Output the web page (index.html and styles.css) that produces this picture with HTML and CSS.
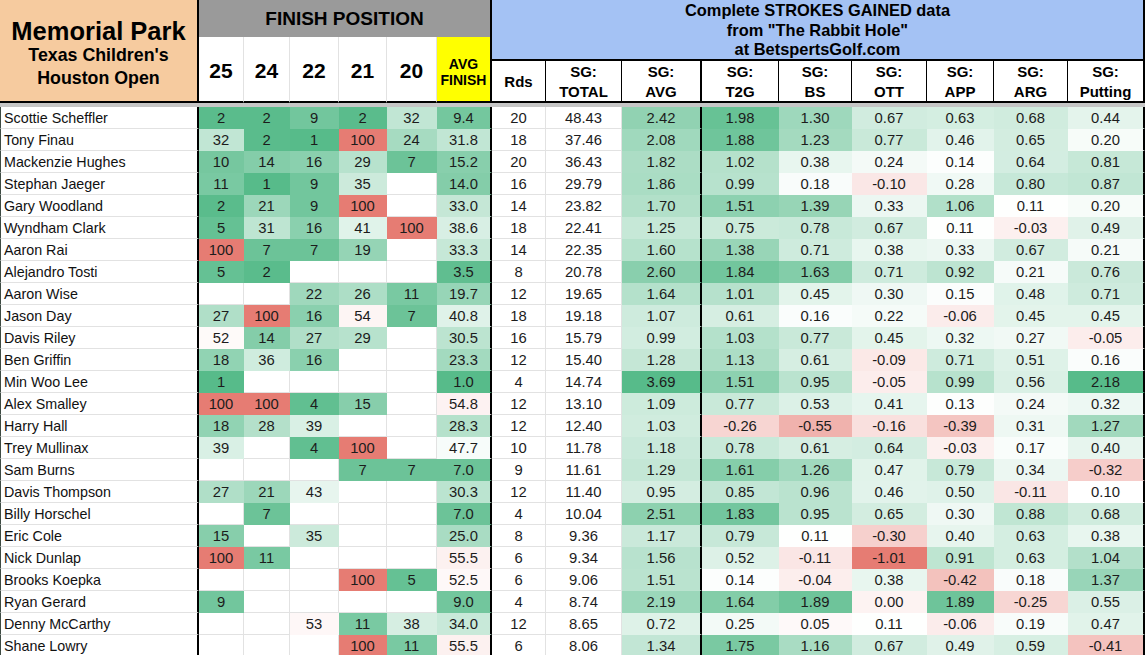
FILE: index.html
```html
<!DOCTYPE html>
<html lang="en">
<head>
<meta charset="utf-8">
<title>Memorial Park – Texas Children's Houston Open</title>
<link rel="stylesheet" href="styles.css">
</head>
<body>
<div class="sheet">
  <div class="title">
    <div class="t1">Memorial Park</div>
    <div class="t2">Texas Children's</div>
    <div class="t2">Houston Open</div>
  </div>
  <div class="fp">FINISH POSITION</div>
  <div class="blue"><span>Complete STROKES GAINED data<br>from "The Rabbit Hole"<br>at BetspertsGolf.com</span></div>
  <div class="yr">25</div>
  <div class="yr">24</div>
  <div class="yr">22</div>
  <div class="yr">21</div>
  <div class="yr">20</div>
  <div class="avgf"><span>AVG<br>FINISH</span></div>
  <div class="lb"><span>Rds</span></div>
  <div class="lb"><span>SG:<br>TOTAL</span></div>
  <div class="lb tk"><span>SG:<br>AVG</span></div>
  <div class="lb"><span>SG:<br>T2G</span></div>
  <div class="lb"><span>SG:<br>BS</span></div>
  <div class="lb"><span>SG:<br>OTT</span></div>
  <div class="lb"><span>SG:<br>APP</span></div>
  <div class="lb"><span>SG:<br>ARG</span></div>
  <div class="lb tk"><span>SG:<br>Putting</span></div>
  <div class="band"></div>

  <div class="nm">Scottie Scheffler</div><div class="c fin">2</div><div class="c fin">2</div><div class="c fin">9</div><div class="c fin">2</div><div class="c fin">32</div><div class="c fin tk">9.4</div><div class="c">20</div><div class="c">48.43</div><div class="c sga tk">2.42</div><div class="c sg">1.98</div><div class="c sg">1.30</div><div class="c sg">0.67</div><div class="c sg">0.63</div><div class="c sg">0.68</div><div class="c sg tk">0.44</div>
  <div class="nm">Tony Finau</div><div class="c fin">32</div><div class="c fin">2</div><div class="c fin">1</div><div class="c fin">100</div><div class="c fin">24</div><div class="c fin tk">31.8</div><div class="c">18</div><div class="c">37.46</div><div class="c sga tk">2.08</div><div class="c sg">1.88</div><div class="c sg">1.23</div><div class="c sg">0.77</div><div class="c sg">0.46</div><div class="c sg">0.65</div><div class="c sg tk">0.20</div>
  <div class="nm">Mackenzie Hughes</div><div class="c fin">10</div><div class="c fin">14</div><div class="c fin">16</div><div class="c fin">29</div><div class="c fin">7</div><div class="c fin tk">15.2</div><div class="c">20</div><div class="c">36.43</div><div class="c sga tk">1.82</div><div class="c sg">1.02</div><div class="c sg">0.38</div><div class="c sg">0.24</div><div class="c sg">0.14</div><div class="c sg">0.64</div><div class="c sg tk">0.81</div>
  <div class="nm">Stephan Jaeger</div><div class="c fin">11</div><div class="c fin">1</div><div class="c fin">9</div><div class="c fin">35</div><div class="c fin"></div><div class="c fin tk">14.0</div><div class="c">16</div><div class="c">29.79</div><div class="c sga tk">1.86</div><div class="c sg">0.99</div><div class="c sg">0.18</div><div class="c sg">-0.10</div><div class="c sg">0.28</div><div class="c sg">0.80</div><div class="c sg tk">0.87</div>
  <div class="nm">Gary Woodland</div><div class="c fin">2</div><div class="c fin">21</div><div class="c fin">9</div><div class="c fin">100</div><div class="c fin"></div><div class="c fin tk">33.0</div><div class="c">14</div><div class="c">23.82</div><div class="c sga tk">1.70</div><div class="c sg">1.51</div><div class="c sg">1.39</div><div class="c sg">0.33</div><div class="c sg">1.06</div><div class="c sg">0.11</div><div class="c sg tk">0.20</div>
  <div class="nm">Wyndham Clark</div><div class="c fin">5</div><div class="c fin">31</div><div class="c fin">16</div><div class="c fin">41</div><div class="c fin">100</div><div class="c fin tk">38.6</div><div class="c">18</div><div class="c">22.41</div><div class="c sga tk">1.25</div><div class="c sg">0.75</div><div class="c sg">0.78</div><div class="c sg">0.67</div><div class="c sg">0.11</div><div class="c sg">-0.03</div><div class="c sg tk">0.49</div>
  <div class="nm">Aaron Rai</div><div class="c fin">100</div><div class="c fin">7</div><div class="c fin">7</div><div class="c fin">19</div><div class="c fin"></div><div class="c fin tk">33.3</div><div class="c">14</div><div class="c">22.35</div><div class="c sga tk">1.60</div><div class="c sg">1.38</div><div class="c sg">0.71</div><div class="c sg">0.38</div><div class="c sg">0.33</div><div class="c sg">0.67</div><div class="c sg tk">0.21</div>
  <div class="nm">Alejandro Tosti</div><div class="c fin">5</div><div class="c fin">2</div><div class="c fin"></div><div class="c fin"></div><div class="c fin"></div><div class="c fin tk">3.5</div><div class="c">8</div><div class="c">20.78</div><div class="c sga tk">2.60</div><div class="c sg">1.84</div><div class="c sg">1.63</div><div class="c sg">0.71</div><div class="c sg">0.92</div><div class="c sg">0.21</div><div class="c sg tk">0.76</div>
  <div class="nm">Aaron Wise</div><div class="c fin"></div><div class="c fin"></div><div class="c fin">22</div><div class="c fin">26</div><div class="c fin">11</div><div class="c fin tk">19.7</div><div class="c">12</div><div class="c">19.65</div><div class="c sga tk">1.64</div><div class="c sg">1.01</div><div class="c sg">0.45</div><div class="c sg">0.30</div><div class="c sg">0.15</div><div class="c sg">0.48</div><div class="c sg tk">0.71</div>
  <div class="nm">Jason Day</div><div class="c fin">27</div><div class="c fin">100</div><div class="c fin">16</div><div class="c fin">54</div><div class="c fin">7</div><div class="c fin tk">40.8</div><div class="c">18</div><div class="c">19.18</div><div class="c sga tk">1.07</div><div class="c sg">0.61</div><div class="c sg">0.16</div><div class="c sg">0.22</div><div class="c sg">-0.06</div><div class="c sg">0.45</div><div class="c sg tk">0.45</div>
  <div class="nm">Davis Riley</div><div class="c fin">52</div><div class="c fin">14</div><div class="c fin">27</div><div class="c fin">29</div><div class="c fin"></div><div class="c fin tk">30.5</div><div class="c">16</div><div class="c">15.79</div><div class="c sga tk">0.99</div><div class="c sg">1.03</div><div class="c sg">0.77</div><div class="c sg">0.45</div><div class="c sg">0.32</div><div class="c sg">0.27</div><div class="c sg tk">-0.05</div>
  <div class="nm">Ben Griffin</div><div class="c fin">18</div><div class="c fin">36</div><div class="c fin">16</div><div class="c fin"></div><div class="c fin"></div><div class="c fin tk">23.3</div><div class="c">12</div><div class="c">15.40</div><div class="c sga tk">1.28</div><div class="c sg">1.13</div><div class="c sg">0.61</div><div class="c sg">-0.09</div><div class="c sg">0.71</div><div class="c sg">0.51</div><div class="c sg tk">0.16</div>
  <div class="nm">Min Woo Lee</div><div class="c fin">1</div><div class="c fin"></div><div class="c fin"></div><div class="c fin"></div><div class="c fin"></div><div class="c fin tk">1.0</div><div class="c">4</div><div class="c">14.74</div><div class="c sga tk">3.69</div><div class="c sg">1.51</div><div class="c sg">0.95</div><div class="c sg">-0.05</div><div class="c sg">0.99</div><div class="c sg">0.56</div><div class="c sg tk">2.18</div>
  <div class="nm">Alex Smalley</div><div class="c fin">100</div><div class="c fin">100</div><div class="c fin">4</div><div class="c fin">15</div><div class="c fin"></div><div class="c fin tk">54.8</div><div class="c">12</div><div class="c">13.10</div><div class="c sga tk">1.09</div><div class="c sg">0.77</div><div class="c sg">0.53</div><div class="c sg">0.41</div><div class="c sg">0.13</div><div class="c sg">0.24</div><div class="c sg tk">0.32</div>
  <div class="nm">Harry Hall</div><div class="c fin">18</div><div class="c fin">28</div><div class="c fin">39</div><div class="c fin"></div><div class="c fin"></div><div class="c fin tk">28.3</div><div class="c">12</div><div class="c">12.40</div><div class="c sga tk">1.03</div><div class="c sg">-0.26</div><div class="c sg">-0.55</div><div class="c sg">-0.16</div><div class="c sg">-0.39</div><div class="c sg">0.31</div><div class="c sg tk">1.27</div>
  <div class="nm">Trey Mullinax</div><div class="c fin">39</div><div class="c fin"></div><div class="c fin">4</div><div class="c fin">100</div><div class="c fin"></div><div class="c fin tk">47.7</div><div class="c">10</div><div class="c">11.78</div><div class="c sga tk">1.18</div><div class="c sg">0.78</div><div class="c sg">0.61</div><div class="c sg">0.64</div><div class="c sg">-0.03</div><div class="c sg">0.17</div><div class="c sg tk">0.40</div>
  <div class="nm">Sam Burns</div><div class="c fin"></div><div class="c fin"></div><div class="c fin"></div><div class="c fin">7</div><div class="c fin">7</div><div class="c fin tk">7.0</div><div class="c">9</div><div class="c">11.61</div><div class="c sga tk">1.29</div><div class="c sg">1.61</div><div class="c sg">1.26</div><div class="c sg">0.47</div><div class="c sg">0.79</div><div class="c sg">0.34</div><div class="c sg tk">-0.32</div>
  <div class="nm">Davis Thompson</div><div class="c fin">27</div><div class="c fin">21</div><div class="c fin">43</div><div class="c fin"></div><div class="c fin"></div><div class="c fin tk">30.3</div><div class="c">12</div><div class="c">11.40</div><div class="c sga tk">0.95</div><div class="c sg">0.85</div><div class="c sg">0.96</div><div class="c sg">0.46</div><div class="c sg">0.50</div><div class="c sg">-0.11</div><div class="c sg tk">0.10</div>
  <div class="nm">Billy Horschel</div><div class="c fin"></div><div class="c fin">7</div><div class="c fin"></div><div class="c fin"></div><div class="c fin"></div><div class="c fin tk">7.0</div><div class="c">4</div><div class="c">10.04</div><div class="c sga tk">2.51</div><div class="c sg">1.83</div><div class="c sg">0.95</div><div class="c sg">0.65</div><div class="c sg">0.30</div><div class="c sg">0.88</div><div class="c sg tk">0.68</div>
  <div class="nm">Eric Cole</div><div class="c fin">15</div><div class="c fin"></div><div class="c fin">35</div><div class="c fin"></div><div class="c fin"></div><div class="c fin tk">25.0</div><div class="c">8</div><div class="c">9.36</div><div class="c sga tk">1.17</div><div class="c sg">0.79</div><div class="c sg">0.11</div><div class="c sg">-0.30</div><div class="c sg">0.40</div><div class="c sg">0.63</div><div class="c sg tk">0.38</div>
  <div class="nm">Nick Dunlap</div><div class="c fin">100</div><div class="c fin">11</div><div class="c fin"></div><div class="c fin"></div><div class="c fin"></div><div class="c fin tk">55.5</div><div class="c">6</div><div class="c">9.34</div><div class="c sga tk">1.56</div><div class="c sg">0.52</div><div class="c sg">-0.11</div><div class="c sg">-1.01</div><div class="c sg">0.91</div><div class="c sg">0.63</div><div class="c sg tk">1.04</div>
  <div class="nm">Brooks Koepka</div><div class="c fin"></div><div class="c fin"></div><div class="c fin"></div><div class="c fin">100</div><div class="c fin">5</div><div class="c fin tk">52.5</div><div class="c">6</div><div class="c">9.06</div><div class="c sga tk">1.51</div><div class="c sg">0.14</div><div class="c sg">-0.04</div><div class="c sg">0.38</div><div class="c sg">-0.42</div><div class="c sg">0.18</div><div class="c sg tk">1.37</div>
  <div class="nm">Ryan Gerard</div><div class="c fin">9</div><div class="c fin"></div><div class="c fin"></div><div class="c fin"></div><div class="c fin"></div><div class="c fin tk">9.0</div><div class="c">4</div><div class="c">8.74</div><div class="c sga tk">2.19</div><div class="c sg">1.64</div><div class="c sg">1.89</div><div class="c sg">0.00</div><div class="c sg">1.89</div><div class="c sg">-0.25</div><div class="c sg tk">0.55</div>
  <div class="nm">Denny McCarthy</div><div class="c fin"></div><div class="c fin"></div><div class="c fin">53</div><div class="c fin">11</div><div class="c fin">38</div><div class="c fin tk">34.0</div><div class="c">12</div><div class="c">8.65</div><div class="c sga tk">0.72</div><div class="c sg">0.25</div><div class="c sg">0.05</div><div class="c sg">0.11</div><div class="c sg">-0.06</div><div class="c sg">0.19</div><div class="c sg tk">0.47</div>
  <div class="nm">Shane Lowry</div><div class="c fin"></div><div class="c fin"></div><div class="c fin"></div><div class="c fin">100</div><div class="c fin">11</div><div class="c fin tk">55.5</div><div class="c">6</div><div class="c">8.06</div><div class="c sga tk">1.34</div><div class="c sg">1.75</div><div class="c sg">1.16</div><div class="c sg">0.67</div><div class="c sg">0.49</div><div class="c sg">0.59</div><div class="c sg tk">-0.41</div>
</div>
<script src="app.js"></script>
</body>
</html>
```

FILE: styles.css
```css
* { box-sizing: border-box; margin: 0; padding: 0; }
html, body { background: #fff; }
body {
  margin: 0;
  overflow: hidden;
  font-family: "Liberation Sans", Arial, Helvetica, sans-serif;
  color: #000;
}
.sheet {
  display: grid;
  grid-template-columns: 199px 45px 46px 49px 48px 50px 55px 54px 76px 80px 77px 73px 75px 67px 74px 77px;
  grid-template-rows: 37px 24px 42px 4px;
  grid-auto-rows: 22px;
  width: 1145px;
}
.title {
  grid-column: 1;
  grid-row: 1 / 4;
  background: #f6cb9f;
  border-right: 2px solid #000;
  border-bottom: 2px solid #000;
  display: flex;
  flex-direction: column;
  align-items: center;
  justify-content: center;
  padding-top: 7px;
  font-weight: bold;
  text-align: center;
}
.t1 { font-size: 25.5px; line-height: 26px; }
.t2 { font-size: 17.8px; line-height: 23px; }
.fp {
  grid-column: 2 / 8;
  grid-row: 1;
  background: #9a9a9a;
  border-right: 2px solid #000;
  display: flex;
  align-items: center;
  justify-content: center;
  font-weight: bold;
  font-size: 19px;
}
.blue {
  grid-column: 8 / 17;
  grid-row: 1 / 3;
  background: #a4c2f4;
  border-right: 2px solid #000;
  border-bottom: 2px solid #000;
  display: flex;
  align-items: center;
  justify-content: center;
  padding-top: 2px;
  font-weight: bold;
  font-size: 16.4px;
  line-height: 19.5px;
  text-align: center;
}
.yr {
  grid-row: 2 / 4;
  background: #fff;
  border-right: 1px solid #e2e2e2;
  border-bottom: 2px solid #000;
  display: flex;
  align-items: center;
  justify-content: center;
  padding-top: 3px;
  font-weight: bold;
  font-size: 21px;
}
.avgf {
  grid-row: 2 / 4;
  grid-column: 7;
  background: #ffff00;
  border-right: 2px solid #000;
  border-bottom: 2px solid #000;
  display: flex;
  align-items: center;
  justify-content: center;
  padding-top: 5px;
  font-weight: bold;
  font-size: 14px;
  line-height: 16px;
  text-align: center;
}
.lb {
  grid-row: 3;
  background: #fff;
  border-right: 1px solid #000;
  border-bottom: 2px solid #000;
  display: flex;
  align-items: center;
  justify-content: center;
  padding-top: 1px;
  font-weight: bold;
  font-size: 15px;
  line-height: 20px;
  text-align: center;
}
.lb.tk { border-right-width: 2px; }
.band {
  grid-column: 1 / -1;
  grid-row: 4;
  background: #c6c6c6;
}
.nm {
  border-left: 1px solid #3d4a42;
  border-right: 2px solid #000;
  border-bottom: 1px solid #e2e2e2;
  padding-left: 3px;
  display: flex;
  align-items: center;
  font-size: 14.3px;
  white-space: nowrap;
  color: #111;
}
.c {
  border-right: 1px solid #e2e2e2;
  border-bottom: 1px solid #e2e2e2;
  display: flex;
  align-items: center;
  justify-content: center;
  font-size: 14.8px;
  color: #1c1c1c;
}
.c.tk { border-right: 2px solid #000; }
```

FILE: app.js
```js
(function () {
  var G = [87, 187, 138], R = [230, 124, 115];
  function mix(c, t) {
    t = Math.max(0, Math.min(1, t));
    return 'rgb(' + [0, 1, 2].map(function (i) {
      return Math.round(255 + (c[i] - 255) * t);
    }).join(',') + ')';
  }
  function paint(sel, lo, mid, hi, lowGood) {
    document.querySelectorAll(sel).forEach(function (el) {
      var s = el.textContent.trim();
      if (!s) return;
      var v = parseFloat(s), col;
      if (v <= mid) col = mix(lowGood ? G : R, (mid - v) / (mid - lo));
      else col = mix(lowGood ? R : G, (v - mid) / (hi - mid));
      el.style.backgroundColor = col;
      el.style.borderBottomColor = col;
      if (!el.classList.contains('tk')) el.style.borderRightColor = col;
    });
  }
  paint('.fin', 1, 50, 100, true);
  paint('.sga', -1, 0, 3.69, false);
  paint('.sg', -1.01, 0.1, 2.18, false);
})();
```
